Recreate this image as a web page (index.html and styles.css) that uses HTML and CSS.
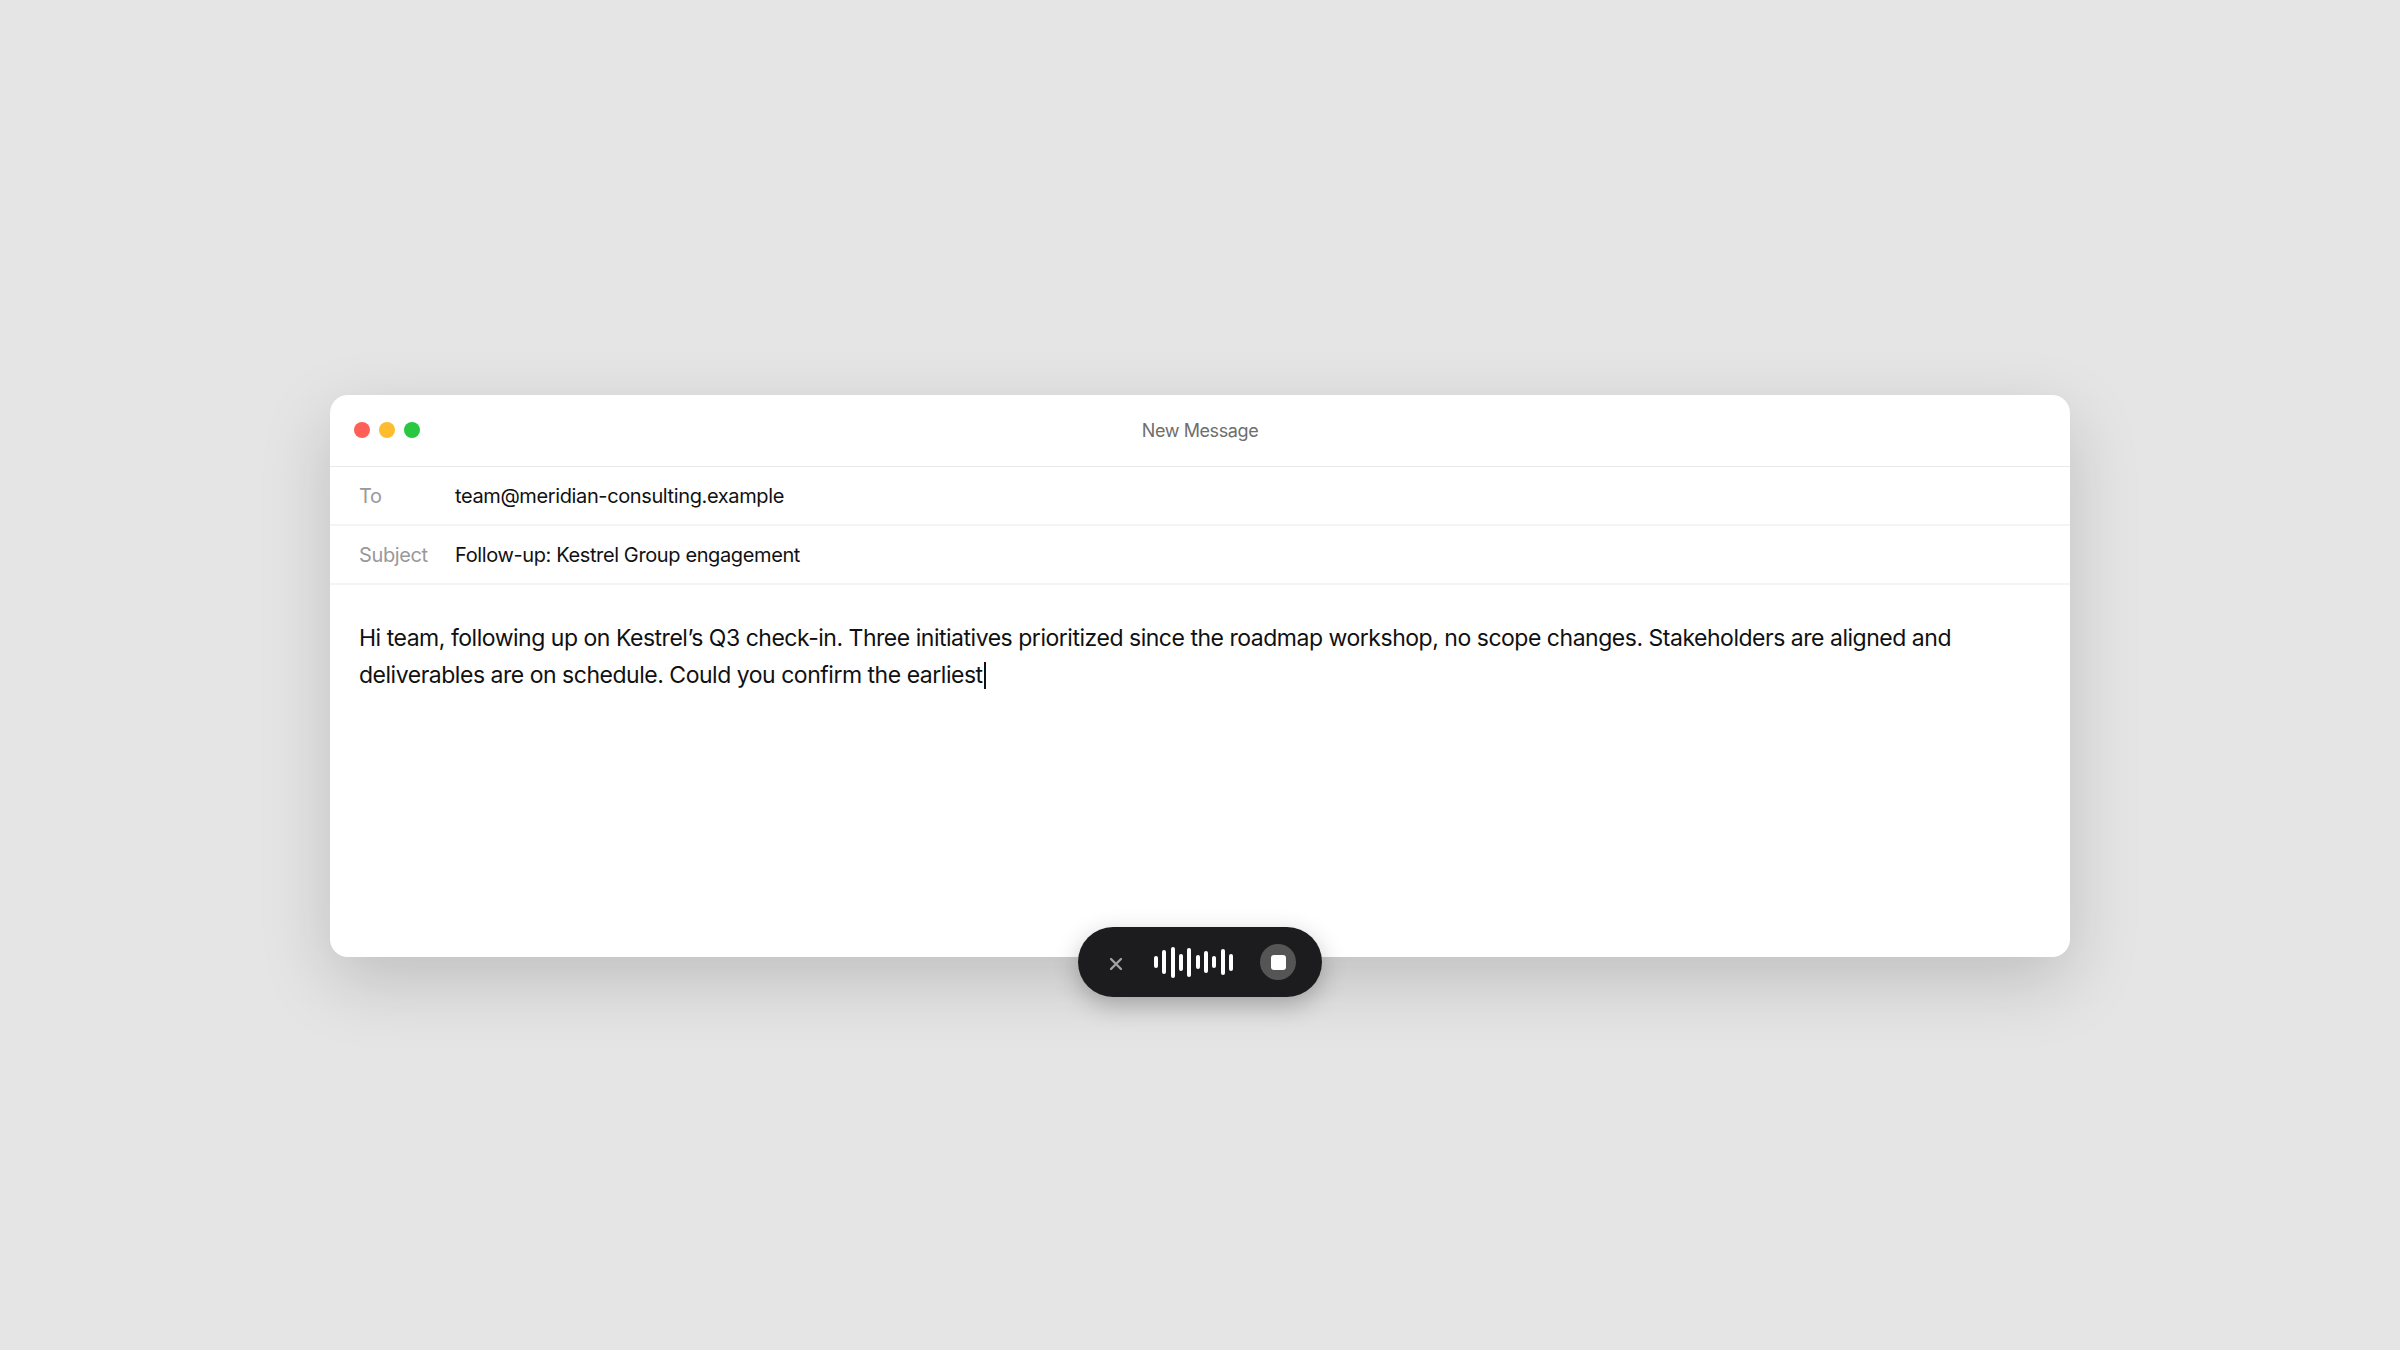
FILE: index.html
```html
<!DOCTYPE html>
<html lang="en">

<head>
    <meta charset="UTF-8">
    <meta name="viewport" content="width=device-width, initial-scale=1.0">
    <title>New Message</title>
    <link rel="stylesheet" href="styles.css">
</head>

<body>
    <div class="window">
        <div class="titlebar">
            <div class="lights">
                <span class="light red"></span>
                <span class="light yellow"></span>
                <span class="light green"></span>
            </div>
            <div class="title">New Message</div>
        </div>

        <div class="field">
            <div class="field-label">To</div>
            <div class="field-value">team@meridian-consulting.example</div>
        </div>
        <div class="field">
            <div class="field-label">Subject</div>
            <div class="field-value">Follow-up: Kestrel Group engagement</div>
        </div>

        <div class="message">Hi team, following up on Kestrel’s Q3 check-in. Three initiatives prioritized since the roadmap workshop, no scope changes. Stakeholders are aligned and deliverables are on schedule. Could you confirm the earliest<span class="caret"></span></div>

        <div class="recorder">
            <svg class="cancel" width="12" height="12" viewBox="0 0 12 12">
                <path d="M1 1 L11 11 M11 1 L1 11" stroke="#a0a0a0" stroke-width="2.4" stroke-linecap="round" fill="none" />
            </svg>
            <div class="wave">
                <span class="bar h12"></span>
                <span class="bar h24"></span>
                <span class="bar h31"></span>
                <span class="bar h17"></span>
                <span class="bar h29"></span>
                <span class="bar h14"></span>
                <span class="bar h22"></span>
                <span class="bar h12"></span>
                <span class="bar h26"></span>
                <span class="bar h17"></span>
            </div>
            <div class="stop"><span class="stop-square"></span></div>
        </div>
    </div>
</body>

</html>
```

FILE: styles.css
```css
* {
    box-sizing: border-box;
}

body {
    font-family: Inter, "Liberation Sans", sans-serif;
    margin: 0;
    padding-top: 2px;
    height: 100vh;
    background: #e5e5e5;
    display: flex;
    align-items: center;
    justify-content: center;
}

.window {
    position: relative;
    width: 1740px;
    height: 562px;
    background: white;
    border-radius: 18px;
    box-shadow: 0 24px 70px rgba(0, 0, 0, 0.17);
}

.titlebar {
    position: relative;
    height: 72px;
    display: flex;
    align-items: center;
    justify-content: center;
    border-bottom: 1px solid #e8e8e8;
}

.lights {
    position: absolute;
    left: 24px;
    top: 27px;
    display: flex;
    gap: 9px;
}

.light {
    width: 16px;
    height: 16px;
    border-radius: 50%;
}

.red {
    background: #ff5f57;
}

.yellow {
    background: #febc2e;
}

.green {
    background: #28c840;
}

.title {
    font-size: 18px;
    letter-spacing: -0.4px;
    color: #6e6e6e;
}

.field {
    height: 59px;
    display: flex;
    align-items: center;
    padding: 0 29px;
    border-bottom: 2px solid #f4f4f4;
    font-size: 20px;
    letter-spacing: -0.38px;
}

.field-label {
    width: 96px;
    color: #999;
}

.field-value {
    color: #111;
}

.message {
    padding: 35px 29px;
    font-size: 23px;
    letter-spacing: -0.48px;
    line-height: 37px;
    color: #111;
}

.caret {
    display: inline-block;
    width: 2px;
    height: 27px;
    margin-left: 1px;
    vertical-align: -6px;
    background: #111;
}

.recorder {
    position: absolute;
    left: 748px;
    top: 532px;
    width: 244px;
    height: 70px;
    display: flex;
    align-items: center;
    padding: 0 26px 0 32px;
    background: #1c1c1e;
    border-radius: 35px;
    box-shadow: 0 8px 24px rgba(0, 0, 0, 0.25);
}

.cancel {
    flex: none;
    margin-top: 4px;
}

.wave {
    margin-left: 32px;
    width: 79px;
    display: flex;
    align-items: center;
    justify-content: space-between;
}

.bar {
    width: 4px;
    border-radius: 2px;
    background: white;
}

.h12 {
    height: 12px;
}

.h14 {
    height: 14px;
}

.h17 {
    height: 17px;
}

.h22 {
    height: 22px;
}

.h24 {
    height: 24px;
}

.h26 {
    height: 26px;
}

.h29 {
    height: 29px;
}

.h31 {
    height: 31px;
}

.stop {
    margin-left: 27px;
    width: 36px;
    height: 36px;
    border-radius: 50%;
    background: #555;
    display: flex;
    align-items: center;
    justify-content: center;
}

.stop-square {
    width: 15px;
    height: 15px;
    border-radius: 3px;
    background: white;
}
```
